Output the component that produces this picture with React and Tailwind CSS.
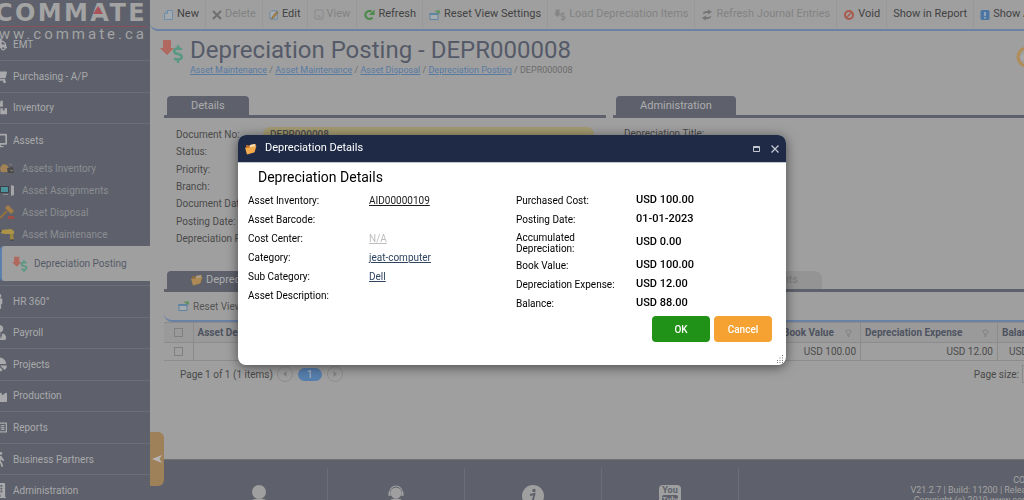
import React from "react";
import {
  FaTruck,
  FaShoppingCart,
  FaBoxes,
  FaDesktop,
  FaMale,
  FaUserTie,
  FaChartPie,
  FaIndustry,
  FaRegNewspaper,
  FaWalking,
  FaBuilding,
  FaDollarSign,
} from "react-icons/fa";

// Red arrow with the green dollar sign, used for depreciation posting
const DepreciationIcon = ({ className, muted }) => (
  <svg viewBox="0 0 24 24" className={className} aria-hidden="true">
    <path d="M3 1h8v8h3l-7 7-7-7h3z" fill={muted ? "#858585" : "#b0685f"} />
    <g transform="translate(11 6)">
      <FaDollarSign size={18} x="-2" color={muted ? "#858585" : "#5b9884"} />
    </g>
  </svg>
);

const FolderIcon = ({ className, muted }) => (
  <svg viewBox="0 0 12 12" className={className} aria-hidden="true">
    <path d="M1 2l4 .5 1-1 5-.5-1 8-8 2z" fill={muted ? "#8e6a3e" : "#c9742a"} />
    <path d="M5 2l5-1 .5 3-6 2z" fill={muted ? "#a8a08e" : "#f6e3bd"} />
    <path d="M0 4.5l3.500.5L5 4l6.500-1L9 9.500 2 11.500z" fill={muted ? "#ad8a55" : "#f3ab4e"} />
  </svg>
);

const NewIcon = () => (
  <svg viewBox="0 0 10 12" className="h-3 w-2.5" aria-hidden="true">
    <path d="M3.500 1.500h5v9h-8v-6z" fill="#a3a8ad" stroke="#6f8eab" />
    <path d="M3.500 1.500v3h-3" fill="none" stroke="#6f8eab" />
  </svg>
);

const DeleteIcon = () => (
  <svg viewBox="0 0 10 10" className="size-2.5" aria-hidden="true">
    <path d="M1 1l8 8M9 1L1 9" stroke="#6f6f6f" strokeWidth="2" />
  </svg>
);

const EditIcon = () => (
  <svg viewBox="0 0 11 11" className="size-2.5" aria-hidden="true">
    <path d="M3 1h6v9H1V3z" fill="#a9adb0" stroke="#6585a3" />
    <path d="M3 8l5-6 2 1-5 6-2 .5z" fill="#a98648" stroke="#67583d" strokeWidth=".5" />
  </svg>
);

const ViewIcon = () => (
  <svg viewBox="0 0 10 12" className="h-3 w-2.5" aria-hidden="true">
    <path d="M1 1h8v9H1z" fill="none" stroke="#8a8a8a" />
    <path d="M3 7h3v3" fill="none" stroke="#8a8a8a" />
  </svg>
);

const RefreshIcon = () => (
  <svg viewBox="0 0 12 12" className="size-3" aria-hidden="true">
    <path d="M9.500 8.500A4 4 0 1 1 8.500 2.500" fill="none" stroke="#4c8a4b" strokeWidth="2.200" />
    <path d="M11.500 .5v5.500H6z" fill="#4c8a4b" />
  </svg>
);

const ResetIcon = () => (
  <svg viewBox="0 0 12 12" className="size-3" aria-hidden="true">
    <path d="M1 4.500h8v6H1z" fill="#a6abae" stroke="#5f83a2" />
    <path d="M.5 4h9v2h-9z" fill="#5f83a2" />
    <path d="M6 3c1-2 2-2 3-1l1-1.500 1.500 4-4-.5 1-1z" fill="#5c9159" />
  </svg>
);

const JournalIcon = () => (
  <svg viewBox="0 0 12 12" className="size-3" aria-hidden="true">
    <path d="M2 5c0-3 3-3 5-3V.5L11 3 7 5.500V4C5 4 4 4 2 5z" fill="#757575" />
    <path d="M10 7c0 3-3 3-5 3v1.500L1 9l4-2.500V8c2 0 3 0 5-1z" fill="#757575" />
  </svg>
);

const VoidIcon = () => (
  <svg viewBox="0 0 12 12" className="size-3" aria-hidden="true">
    <circle cx="6" cy="6" r="4" fill="none" stroke="#aa5a4c" strokeWidth="2" />
    <path d="M3 9l6-6" stroke="#aa5a4c" strokeWidth="1.500" />
  </svg>
);

const AuditIcon = () => (
  <svg viewBox="0 0 10 12" className="h-3 w-2.5" aria-hidden="true">
    <rect x=".5" y="1" width="9" height="10" rx="1.500" fill="#4d76a3" />
    <path d="M5 3v4M5 8v1.500" stroke="#a5b2c0" strokeWidth="1.500" />
  </svg>
);

const toolbar = [
  { label: "New", icon: <NewIcon /> },
  { label: "Delete", icon: <DeleteIcon />, disabled: true },
  { label: "Edit", icon: <EditIcon /> },
  { label: "View", icon: <ViewIcon />, disabled: true },
  { label: "Refresh", icon: <RefreshIcon /> },
  { label: "Reset View Settings", icon: <ResetIcon /> },
  {
    label: "Load Depreciation Items",
    icon: <DepreciationIcon className="size-3" muted />,
    disabled: true,
  },
  { label: "Refresh Journal Entries", icon: <JournalIcon />, disabled: true },
  { label: "Void", icon: <VoidIcon /> },
  { label: "Show in Report" },
  { label: "Show Audit Trail", icon: <AuditIcon /> },
];

const topMenu = [
  { label: "EMT", Icon: FaTruck },
  { label: "Purchasing - A/P", Icon: FaShoppingCart },
  { label: "Inventory", Icon: FaBoxes },
  { label: "Assets", Icon: FaDesktop },
];

const bottomMenu = [
  { label: "HR 360°", Icon: FaMale },
  { label: "Payroll", Icon: FaUserTie },
  { label: "Projects", Icon: FaChartPie },
  { label: "Production", Icon: FaIndustry },
  { label: "Reports", Icon: FaRegNewspaper },
  { label: "Business Partners", Icon: FaWalking },
  { label: "Administration", Icon: FaBuilding },
];

const assetMenu = [
  {
    label: "Assets Inventory",
    art: (
      <>
        <path d="M0 7l3-4 4 1 2 3-2 4H1z" fill="#a38256" />
        <path d="M7 7l6-1 1 6H8z" fill="#4a4a48" />
        <path d="M9 3l3 1M10 9l3 1" stroke="#858079" />
      </>
    ),
  },
  {
    label: "Asset Assignments",
    art: (
      <>
        <rect y="3" width="9" height="7" fill="#3f4349" />
        <rect x="1" y="4" width="7" height="5" fill="#4b929b" />
        <path d="M3 11h5v1H3z" fill="#8c8c8c" />
        <path d="M11 2l3 1v9l-3 1z" fill="#a5a5a5" />
      </>
    ),
  },
  {
    label: "Asset Disposal",
    art: (
      <>
        <path d="M0 13l7-7" stroke="#94713f" strokeWidth="2" />
        <path d="M8 0l6 6-3 3-6-6z" fill="#a37d43" />
        <path d="M8 11h6v3H8z" fill="#a04b43" />
      </>
    ),
  },
  {
    label: "Asset Maintenance",
    art: (
      <>
        <path d="M1 3l10-1 3 2v3H4L1 6z" fill="#ab9447" />
        <path d="M10 7h3l1 6h-4z" fill="#9d873f" />
        <path d="M0 4h2M10 13h4" stroke="#3f3f3f" />
      </>
    ),
  },
];

const crumbs = [
  "Asset Maintenance",
  "Asset Maintenance",
  "Asset Disposal",
  "Depreciation Posting",
];

const fields = [
  "Document No:",
  "Status:",
  "Priority:",
  "Branch:",
  "Document Date:",
  "Posting Date:",
  "Depreciation Period:",
];

const assetDetails = [
  { label: "Asset Inventory:", value: "AID00000109", tone: "text-[#1b1b1b]" },
  { label: "Asset Barcode:" },
  { label: "Cost Center:", value: "N/A", tone: "text-[#bdbdbd]" },
  { label: "Category:", value: "jeat-computer", tone: "text-[#2f4560]" },
  { label: "Sub Category:", value: "Dell", tone: "text-[#2f4560]" },
  { label: "Asset Description:" },
];

const costDetails = [
  { label: "Purchased Cost:", value: "USD 100.00" },
  { label: "Posting Date:", value: "01-01-2023" },
  { label: "Accumulated Depreciation:", value: "USD 0.00", tall: true },
  { label: "Book Value:", value: "USD 100.00" },
  { label: "Depreciation Expense:", value: "USD 12.00" },
  { label: "Balance:", value: "USD 88.00" },
];

const MenuItem = ({ label, Icon }) => (
  <a
    href="#"
    className="flex items-center border-b border-[#6b6e77] text-[10px] text-[#a9a9ab]"
  >
    <Icon className="-ml-2 mr-1.5 size-[15px] shrink-0" />
    {label}
  </a>
);

const Sidebar = () => (
  <aside className="w-[150px] shrink-0 overflow-hidden bg-[#5e616b]">
    <div className="flex h-[29px] flex-col items-end pr-[3px]">
      <div className="relative font-['DejaVu_Sans'] text-2xl leading-[26px] font-bold tracking-widest text-[#a3a3a4]">
        COMMATE
        <svg viewBox="0 0 10 8" className="absolute top-1.5 right-11 h-2 w-2.5">
          <path d="M5 0l5 8H0z" fill="#ab5158" />
        </svg>
      </div>
      <div className="w-[170px] border-t border-[#8b4f59] text-right text-[15px] leading-[14px] tracking-[3px] text-[#a3a3a4]">
        www.commate.ca
      </div>
    </div>
    <nav>
      <div className="grid h-[127px] auto-rows-fr [&>a:last-child]:border-0">
        {topMenu.map((m) => (
          <MenuItem key={m.label} {...m} />
        ))}
      </div>
      <div className="py-px">
        {assetMenu.map(({ label, art }) => (
          <a
            key={label}
            href="#"
            className="flex h-[22px] items-center gap-2 text-[10px] text-[#8b8d92]"
          >
            <svg viewBox="0 0 14 14" className="size-3.5 shrink-0">
              {art}
            </svg>
            {label}
          </a>
        ))}
      </div>
      <a
        href="#"
        className="flex h-[35px] items-center gap-1.5 rounded-l border-l-2 border-[#5c80ad] bg-[#9f9f9f] pl-2.5 text-[10px] text-[#555a68]"
      >
        <DepreciationIcon className="size-4 shrink-0" />
        Depreciation Posting
      </a>
      <div className="mt-1 grid h-[222px] auto-rows-fr border-t border-[#6b6e77]">
        {bottomMenu.map((m) => (
          <MenuItem key={m.label} {...m} />
        ))}
      </div>
    </nav>
  </aside>
);

const PanelTab = ({ children }) => (
  <h2 className="ml-[3px] flex h-[19px] w-fit items-center rounded-t bg-[#5e616b] px-6 pt-0.5 text-[11px] text-[#adadae]">
    {children}
  </h2>
);

const FilterPin = () => (
  <svg viewBox="0 0 7 8" className="h-2 w-[7px]" aria-hidden="true">
    <path d="M1 2.500C1 .5 6 .5 6 2.500S4.500 4 4 5v2.500H3V5C2.500 4 1 4 1 2.500z" fill="none" stroke="#808080" />
  </svg>
);

const HeadCell = ({ children, className }) => (
  <th className={`border-r border-[#8c8c8c] px-1 text-left font-bold ${className}`}>
    <div className="flex items-center justify-between pr-1">
      {children}
      <FilterPin />
    </div>
  </th>
);

const CheckBox = ({ label }) => (
  <input
    type="checkbox"
    aria-label={label}
    className="block size-[9px] appearance-none border border-[#808080]"
  />
);

const AssetGrid = () => (
  <table className="w-[calc(100%+36px)] table-fixed border-collapse text-[10px] text-[#4c4c4c]">
    <thead>
      <tr className="h-5 border-y border-[#8c8c8c] bg-[#9a9a9a] text-[#4e5360]">
        <th className="w-[29px] border-r border-[#8c8c8c] pl-2.5">
          <CheckBox label="Select all" />
        </th>
        <HeadCell className="">Asset Description</HeadCell>
        <HeadCell className="w-[82px]">Book Value</HeadCell>
        <HeadCell className="w-[137px]">Depreciation Expense</HeadCell>
        <HeadCell className="w-[62px]">Balance</HeadCell>
      </tr>
    </thead>
    <tbody>
      <tr className="h-[18px] border-b border-[#8c8c8c] text-right">
        <td className="border-r border-[#8c8c8c] pl-2.5">
          <CheckBox label="Select row" />
        </td>
        <td></td>
        <td className="border-r border-[#8c8c8c] px-1">USD 100.00</td>
        <td className="border-r border-[#8c8c8c] px-1">USD 12.00</td>
        <td className="px-1">USD 88.00</td>
      </tr>
    </tbody>
  </table>
);

const PagerButton = ({ d, label }) => (
  <button
    aria-label={label}
    className="flex size-4 items-center justify-center rounded-full border border-[#8e8e8e]"
  >
    <svg viewBox="0 0 6 6" className="size-1.5">
      <path d={d} fill="#828282" />
    </svg>
  </button>
);

const footerIcons = [
  <svg key="user" viewBox="0 0 22 22" className="size-[22px]">
    <circle cx="11" cy="7" r="7" fill="#9f9f9f" />
    <path d="M4 15c3-2 11-2 14 0v7H4z" fill="#9f9f9f" />
  </svg>,
  <svg key="support" viewBox="0 0 22 22" className="size-[22px]">
    <circle cx="11" cy="8" r="5.500" fill="#9f9f9f" />
    <path d="M4.500 8a6.500 7 0 0 1 13 0" fill="none" stroke="#9f9f9f" strokeWidth="1.200" />
    <path d="M3.500 7h2v4h-2zM16.500 7h2v4h-2zM5 15c3-2 9-2 12 0v7H5z" fill="#9f9f9f" />
  </svg>,
  <svg key="info" viewBox="0 0 22 22" className="size-[22px]">
    <circle cx="11" cy="11" r="11" fill="#9f9f9f" />
    <circle cx="12" cy="5.500" r="1.700" fill="#5e616b" />
    <path d="M8 10l4.500-1-2 7.500 2-1" fill="none" stroke="#5e616b" strokeWidth="1.800" />
  </svg>,
  <div
    key="youtube"
    className="flex h-[22px] w-[22px] flex-col items-center overflow-hidden rounded bg-[#9f9f9f] text-[9px] leading-[10px] font-bold text-[#5e616b]"
  >
    <span>You</span>
    <span className="w-4 rounded-xs bg-[#5e616b] text-center text-[8px] text-[#9f9f9f]">
      Tube
    </span>
  </div>,
];

const Footer = () => (
  <footer className="flex h-[41px] shrink-0 overflow-hidden border-t border-[#70736f] bg-[#5e616b] pl-[41px]">
    {footerIcons.map((icon) => (
      <a
        key={icon.key}
        href="#"
        aria-label={icon.key}
        className="mt-2 flex w-[137px] shrink-0 justify-center border-r border-[#6b6e77] pt-[17px]"
      >
        {icon}
      </a>
    ))}
    <p className="-mr-[136px] ml-auto w-[250px] shrink-0 pt-[15px] text-center text-[9px] leading-[10px] whitespace-nowrap text-[#a3a3a4]">
      COMMATE
      <br />
      V21.2.7 | Build: 11200 | Release Date: 2023-01-01 12:30:00 AM
      <br />
      Copyright (c) 2019 www.commate.ca. All rights are reserved.
    </p>
  </footer>
);

const DetailsDialog = () => (
  <div className="fixed inset-0 flex items-center justify-center">
    <div
      role="dialog"
      aria-label="Depreciation Details"
      className="w-[548px] overflow-hidden rounded-lg bg-white text-black shadow-[0_2px_12px_rgba(0,0,0,0.55)]"
    >
      <div className="flex h-7 items-center border-b border-[#c3c6cd] bg-[#1f2a47] px-[7px] text-[11px] text-white">
        <FolderIcon className="mr-2 size-3" />
        <span className="flex-1">Depreciation Details</span>
        <button aria-label="Maximize" className="mr-[11px]">
          <svg viewBox="0 0 7 6" className="h-1.5 w-[7px]">
            <path d="M.5 .5h6v5h-6zM.5 1.500h6" fill="none" stroke="#c4c8d1" />
          </svg>
        </button>
        <button aria-label="Close">
          <svg viewBox="0 0 8 8" className="size-2">
            <path d="M.5 .5l7 7M7.500 .5l-7 7" stroke="#c4c8d1" strokeWidth="1.300" />
          </svg>
        </button>
      </div>
      <h3 className="pt-1 pl-5 text-sm leading-5">Depreciation Details</h3>
      <div className="grid grid-cols-[268px_1fr] pt-1 pl-2.5 text-[10px]">
        <dl>
          {assetDetails.map(({ label, value, tone }) => (
            <div key={label} className="flex h-[19px] items-center">
              <dt className="w-[121px]">{label}</dt>
              <dd>
                {value && (
                  <a href="#" className={`underline ${tone}`}>
                    {value}
                  </a>
                )}
              </dd>
            </div>
          ))}
        </dl>
        <dl>
          {costDetails.map(({ label, value, tall }) => (
            <div
              key={label}
              className={`flex items-center ${tall ? "h-[27px]" : "h-[19px]"}`}
            >
              <dt className={`leading-[11px] ${tall ? "w-[120px] pr-10" : "w-[120px]"}`}>
                {label}
              </dt>
              <dd className="text-[11px] font-medium">{value}</dd>
            </div>
          ))}
        </dl>
      </div>
      <div className="flex justify-end gap-1 pt-[3px] pr-3.5 text-[10px] font-medium text-white">
        <button className="h-[26px] w-[58px] rounded bg-[#1f9217]">OK</button>
        <button className="h-[26px] w-[58px] rounded bg-[#f5a233]">Cancel</button>
      </div>
      <div className="flex h-[23px] items-end justify-end p-[2px]">
        <svg viewBox="0 0 8 8" className="size-2">
          <path
            d="M6 .5h1M6 3h1M3.500 3h1M6 5.500h1M3.500 5.500h1M1 5.500h1M6 7.500h1M3.500 7.500h1M1 7.500h1"
            stroke="#777"
          />
        </svg>
      </div>
    </div>
  </div>
);

const App = () => {
  return (
    <div className="flex h-screen overflow-hidden bg-[#9f9f9f] font-['Roboto',sans-serif]">
      <Sidebar />
      <main className="relative flex min-w-0 flex-1 flex-col overflow-hidden">
        {/* Action toolbar */}
        <div className="flex h-[31px] shrink-0 items-center overflow-hidden rounded-bl-lg border-b-2 border-[#6a82a6] pl-2">
          {toolbar.map(({ label, icon, disabled }) => (
            <button
              key={label}
              disabled={disabled}
              className="flex h-full shrink-0 items-center gap-[3px] border-r border-[#989898] px-1.5 text-[11px] text-[#424242] disabled:text-[#828282]"
            >
              {icon}
              {label}
            </button>
          ))}
        </div>

        <div className="min-h-0 flex-1 overflow-hidden pl-3.5">
          {/* Page title and breadcrumbs */}
          <header className="flex h-[65px] items-start">
            <DepreciationIcon className="mt-2 -ml-1 size-6 shrink-0" />
            <div className="pt-1.5 pl-1.5">
              <h1 className="text-2xl leading-[27px] text-[#555a68]">
                Depreciation Posting - DEPR000008
              </h1>
              <nav className="text-[9px] leading-3 text-[#6c6c6c]">
                {crumbs.map((c, i) => (
                  <React.Fragment key={i}>
                    <a href="#" className="text-[#577aa3] underline">
                      {c}
                    </a>
                    {" / "}
                  </React.Fragment>
                ))}
                DEPR000008
              </nav>
            </div>
            <svg viewBox="0 0 22 22" className="-mr-3.5 mt-[15px] ml-auto size-[22px] shrink-0">
              <circle cx="11" cy="11" r="9" fill="none" stroke="#b08c58" strokeWidth="3" />
              <path d="M4 11l6-6v12z" fill="#a9a9a9" />
            </svg>
          </header>

          {/* Details / Administration panels */}
          <div className="grid h-[175px] grid-cols-[442px_1fr] gap-[7px]">
            <section>
              <PanelTab>Details</PanelTab>
              <div className="border-t-[3px] border-[#5e616b]">
                <div className="grid h-[129px] auto-rows-fr pt-2 pl-3 text-[10px] text-[#4a4a4a]">
                  {fields.map((f) => (
                    <div key={f} className="flex items-center">
                      <span className="w-[87px] shrink-0 whitespace-nowrap">{f}</span>
                      {f === "Document No:" && (
                        <span className="mr-3 flex-1 rounded-lg bg-[#a39a70] px-[7px] font-medium">
                          DEPR000008
                        </span>
                      )}
                    </div>
                  ))}
                </div>
              </div>
            </section>
            <section>
              <PanelTab>Administration</PanelTab>
              <div className="border-t-[3px] border-[#5e616b] pt-2 pl-[11px] text-[10px] leading-4 text-[#4a4a4a]">
                Depreciation Title:
              </div>
            </section>
          </div>

          {/* Grid tabs */}
          <div className="flex h-[21px] justify-between border-b-[3px] border-[#5e616b] pr-[202px] pl-[3px] text-[11px]">
            <button className="flex items-center gap-[3px] rounded-t bg-[#5e616b] px-6 text-[#adadae]">
              <FolderIcon className="size-3" muted />
              Depreciation Details
            </button>
            <button className="rounded-t-lg bg-[#949494] px-6 text-[#7b7b7b]">
              Attachments
            </button>
          </div>
          <div className="flex h-[30px] items-center rounded-bl-lg border-b-2 border-[#6a82a6] pl-3.5 text-[10px] text-[#555]">
            <button className="flex items-center gap-[3px]">
              <ResetIcon />
              Reset View Settings
            </button>
          </div>
          <AssetGrid />
          <div className="flex h-[26px] items-center pl-4 text-[10px] text-[#4a4a4a]">
            <span>Page 1 of 1 (1 items)</span>
            <div className="ml-1 flex items-center gap-[5px]">
              <PagerButton label="Previous" d="M4.500 0v6L1 3z" />
              <span className="h-[13px] w-6 rounded-full bg-[#577fae] text-center leading-[13px] text-[#b5bcc5]">
                1
              </span>
              <PagerButton label="Next" d="M1.500 0v6L5 3z" />
            </div>
            <label htmlFor="size" className="ml-auto">
              Page size:
            </label>
            <select
              id="size"
              className="-mr-10 ml-[3px] h-[18px] w-[42px] shrink-0 appearance-none border border-[#8a8a8a] pl-2"
            >
              <option>10</option>
            </select>
          </div>
        </div>
        <Footer />

        {/* Sidebar collapse handle */}
        <button
          aria-label="Collapse menu"
          className="absolute bottom-3.5 left-0 flex h-[54px] w-3.5 items-center justify-center rounded-r-md bg-[#9f8159]"
        >
          <svg viewBox="0 0 10 8" className="h-2 w-2.5">
            <path d="M0 4l10-4-2.500 4L10 8z" fill="#b5b5b5" />
          </svg>
        </button>
      </main>
      <DetailsDialog />
    </div>
  );
};

export default App;
